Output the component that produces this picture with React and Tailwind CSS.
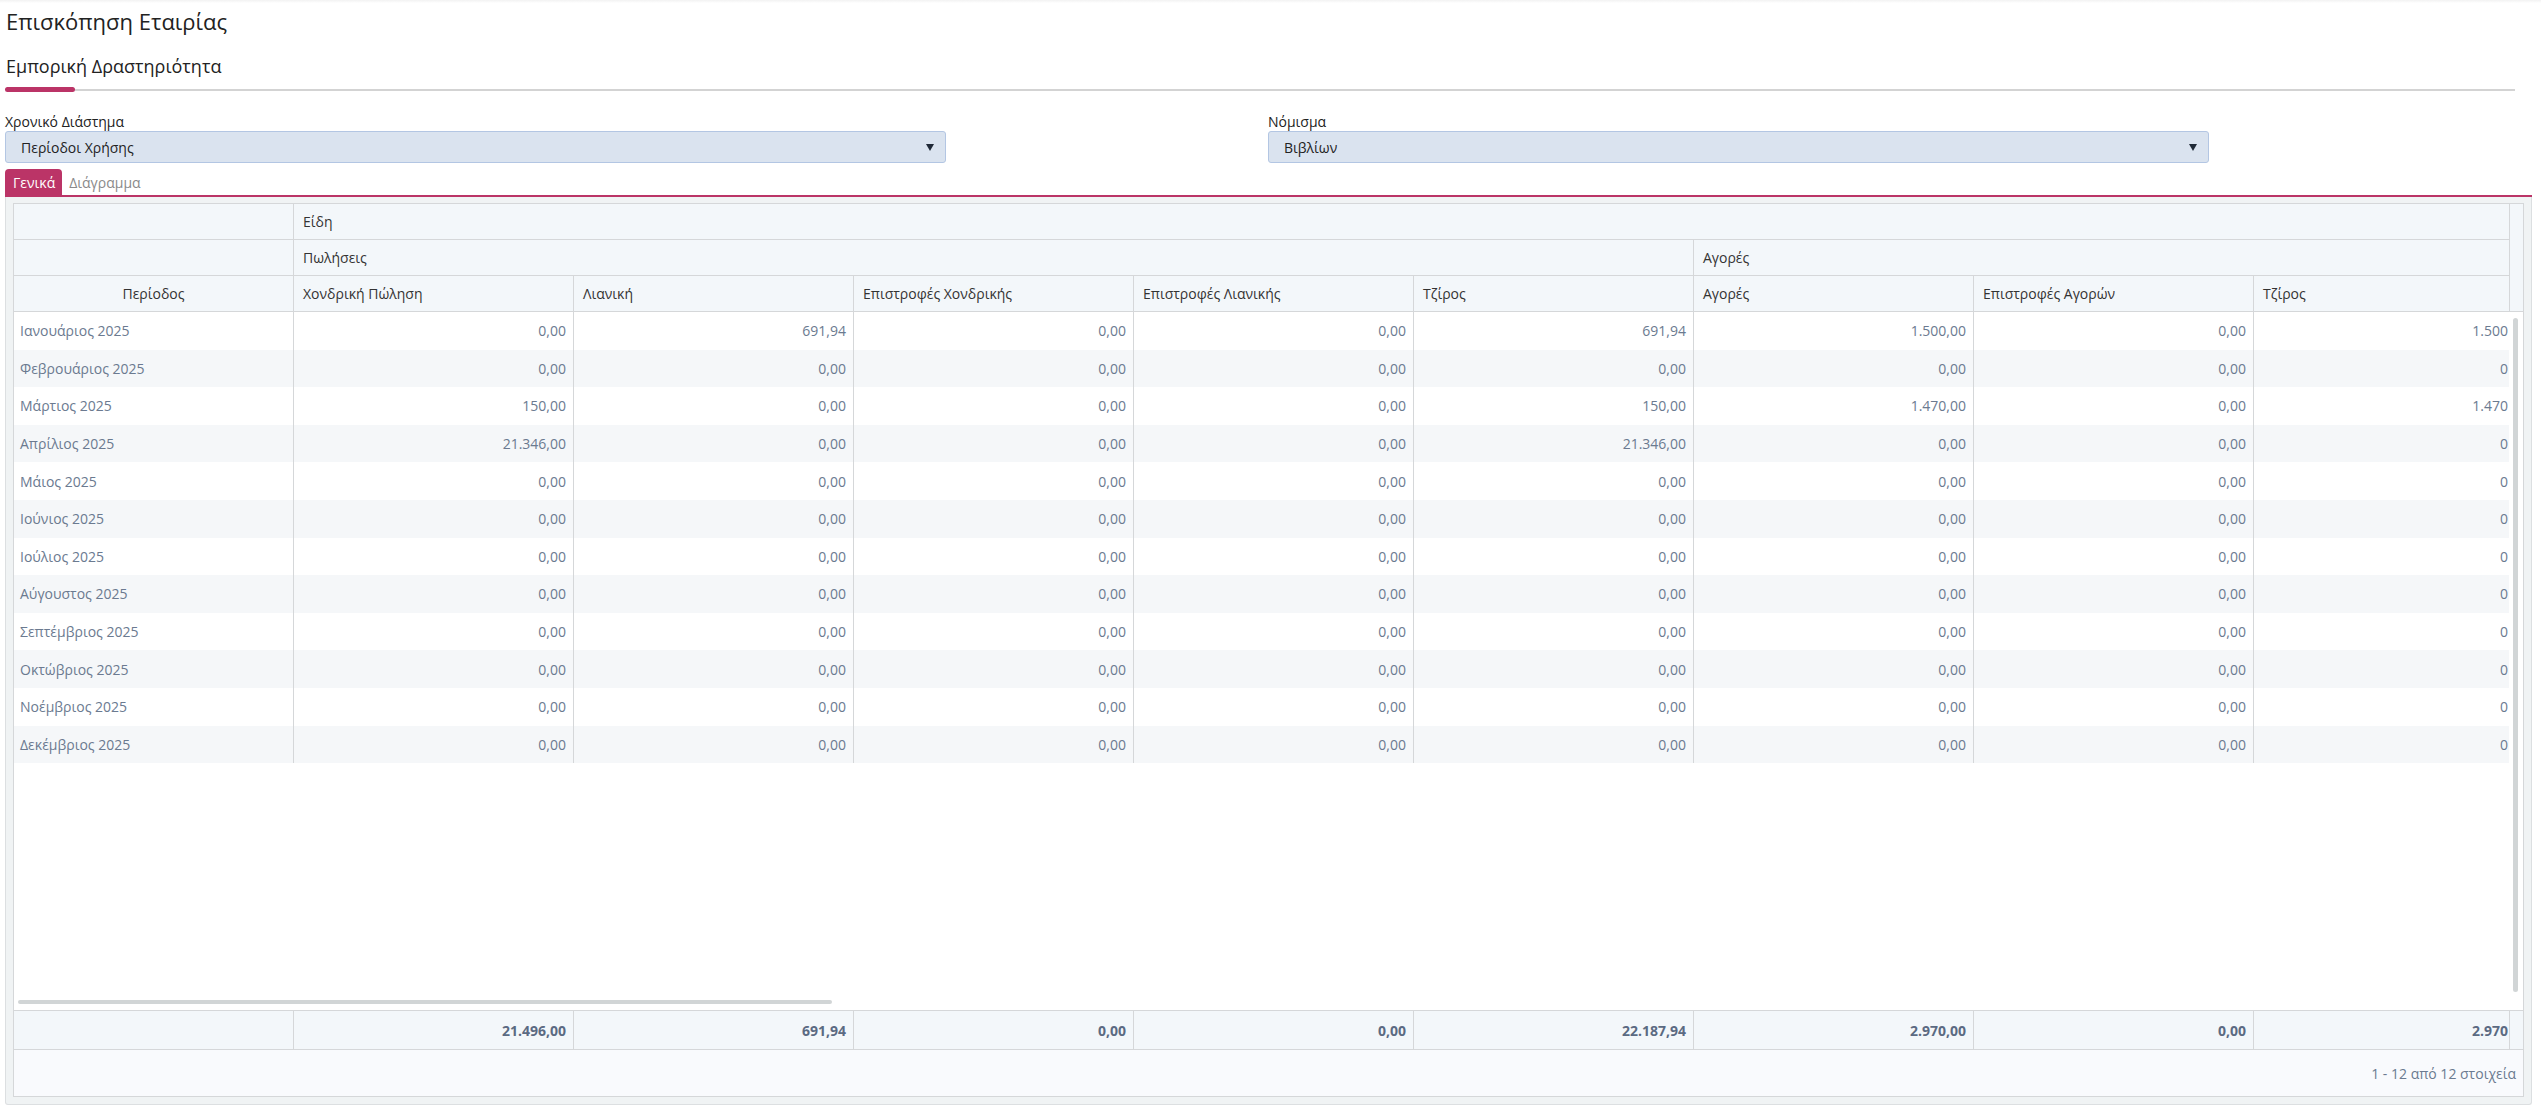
import React from "react";

const COL = "w-[280px] shrink-0";
const LAST = "w-[255px] shrink-0";

const headCols = [
  "Χονδρική Πώληση",
  "Λιανική",
  "Επιστροφές Χονδρικής",
  "Επιστροφές Λιανικής",
  "Τζίρος",
  "Αγορές",
  "Επιστροφές Αγορών",
  "Τζίρος",
];

// the last column is cut by the grid edge, only its visible part is shown
const Z = ["0,00", "0,00", "0,00", "0,00", "0,00", "0,00", "0,00", "0"];

const rows = [
  { name: "Ιανουάριος 2025", vals: ["0,00", "691,94", "0,00", "0,00", "691,94", "1.500,00", "0,00", "1.500"] },
  { name: "Φεβρουάριος 2025", vals: Z },
  { name: "Μάρτιος 2025", vals: ["150,00", "0,00", "0,00", "0,00", "150,00", "1.470,00", "0,00", "1.470"] },
  { name: "Απρίλιος 2025", vals: ["21.346,00", "0,00", "0,00", "0,00", "21.346,00", "0,00", "0,00", "0"] },
  { name: "Μάιος 2025", vals: Z },
  { name: "Ιούνιος 2025", vals: Z },
  { name: "Ιούλιος 2025", vals: Z },
  { name: "Αύγουστος 2025", vals: Z },
  { name: "Σεπτέμβριος 2025", vals: Z },
  { name: "Οκτώβριος 2025", vals: Z },
  { name: "Νοέμβριος 2025", vals: Z },
  { name: "Δεκέμβριος 2025", vals: Z },
];

const totals = ["21.496,00", "691,94", "0,00", "0,00", "22.187,94", "2.970,00", "0,00", "2.970"];

function SelectBox({ label, value, width }) {
  return (
    <div className="flex flex-col">
      <span className="text-[14px] leading-[20px] text-[#222]">{label}</span>
      <div className={`${width} h-[32px] mt-[-1px] flex items-center justify-between pl-[15px] pr-[11px] bg-[#dae3ef] border border-[#b3c6e3] rounded-[3px] text-[14px] text-[#222]`}>
        <span>{value}</span>
        <svg width="8" height="7" viewBox="0 0 8 7">
          <path d="M0 0h8L4 7z" fill="#1f2937" />
        </svg>
      </div>
    </div>
  );
}

function Cells({ vals, className }) {
  return vals.map((v, j) => (
    <div
      key={j}
      className={`${j === vals.length - 1 ? LAST + " pr-[1px]" : COL + " border-r border-[#d5d7d9] pr-[7px]"} flex items-center justify-end ${className || ""}`}
    >
      {v}
    </div>
  ));
}

export default function App() {
  return (
    <div className="w-[2541px] h-[1113px] bg-white overflow-hidden text-[#333]" style={{ fontFamily: '"Open Sans", "Noto Sans", sans-serif' }}>
      <div className="h-[3px] bg-gradient-to-b from-[#f2f2f2] to-white" />
      <div className="px-[5px] pr-[9px]">
        <h1 className="mt-[3px] text-[22px] leading-[30px] text-[#222] pl-[1px]">Επισκόπηση Εταιρίας</h1>
        <h2 className="mt-[18px] text-[18px] leading-[24px] text-[#222] pl-[1px]">Εμπορική Δραστηριότητα</h2>
        <div className="mt-[9px] flex items-center w-[2510px]">
          <div className="w-[70px] h-[5px] rounded-full bg-[#bb3467]" />
          <div className="flex-1 h-[2px] bg-[#d3d3d3]" />
        </div>

        <div className="mt-[20px] flex">
          <div className="w-[1263px]">
            <SelectBox label="Χρονικό Διάστημα" value="Περίοδοι Χρήσης" width="w-[941px]" />
          </div>
          <div>
            <SelectBox label="Νόμισμα" value="Βιβλίων" width="w-[941px]" />
          </div>
        </div>

        <div className="mt-[7px] flex items-end h-[27px] border-b-2 border-[#bb3467] w-[2527px]">
          <div className="h-[26px] pl-[8px] pr-[7px] flex items-center bg-[#bb3467] text-white text-[14px] font-medium rounded-t-[4px]">Γενικά</div>
          <div className="h-[26px] pl-[7px] pr-[6px] flex items-center text-[#8a8a8a] text-[14px]">Διάγραμμα</div>
        </div>

        <div className="w-[2527px] h-[908px] bg-[#f0f3f4] border border-t-0 border-[#dcdfe1] rounded-b-[3px] px-[7px] pt-[6px]">
          <div className="h-[894px] border border-[#d5d7d9] bg-white flex flex-col text-[14px]">
            {/* header */}
            <div className="h-[108px] flex bg-[#f3f7fa] border-b border-[#d5d7d9]">
              <div className="flex-1 overflow-hidden">
                <div className="w-[2495px] text-[#333]">
                  <div className="flex h-[36px] border-b border-[#d5d7d9]">
                    <div className={`${COL} border-r border-[#d5d7d9]`} />
                    <div className="flex-1 flex items-center pl-[9px]">Είδη</div>
                  </div>
                  <div className="flex h-[36px] border-b border-[#d5d7d9]">
                    <div className={`${COL} border-r border-[#d5d7d9]`} />
                    <div className="w-[1400px] shrink-0 flex items-center pl-[9px] border-r border-[#d5d7d9]">Πωλήσεις</div>
                    <div className="flex-1 flex items-center pl-[9px]">Αγορές</div>
                  </div>
                  <div className="flex h-[35px]">
                    <div className={`${COL} border-r border-[#d5d7d9] flex items-center justify-center`}>Περίοδος</div>
                    {headCols.map((h, i) => (
                      <div
                        key={i}
                        className={`${i === headCols.length - 1 ? LAST : COL + " border-r border-[#d5d7d9]"} flex items-center pl-[9px]`}
                      >
                        {h}
                      </div>
                    ))}
                  </div>
                </div>
              </div>
              <div className="w-[14px] border-l border-[#d5d7d9]" />
            </div>

            {/* body */}
            <div className="flex-1 flex min-h-0">
              <div className="flex-1 overflow-hidden flex flex-col">
                <div className="w-[2495px] text-[#6b7a90]">
                  {rows.map((r, i) => (
                    <div key={i} className={`flex h-[37.6px] ${i % 2 === 1 ? "bg-[#f5f7f9]" : "bg-white"}`}>
                      <div className={`${COL} border-r border-[#d5d7d9] flex items-center pl-[6px]`}>{r.name}</div>
                      <Cells vals={r.vals} />
                    </div>
                  ))}
                </div>
                <div className="flex-1" />
                <div className="h-[10px] pl-[4px]">
                  <div className="w-[814px] h-[4px] rounded-full bg-[#d1d5d6]" />
                </div>
              </div>
              <div className="w-[14px] pl-[4px] pt-[6px]">
                <div className="w-[5px] h-[674px] rounded-full bg-[#d1d5d6]" />
              </div>
            </div>

            {/* totals */}
            <div className="h-[40px] flex bg-[#f3f7fa] border-t border-b border-[#d5d7d9]">
              <div className="flex-1 overflow-hidden">
                <div className="w-[2495px] h-full flex font-bold text-[#5b6a82]">
                  <div className={`${COL} border-r border-[#d5d7d9]`} />
                  <Cells vals={totals} />
                </div>
              </div>
              <div className="w-[14px] border-l border-[#d5d7d9]" />
            </div>

            {/* pager */}
            <div className="h-[46px] bg-[#f9fafd] flex items-center justify-end pr-[7px] text-[#6b7a90]">
              1 - 12 από 12 στοιχεία
            </div>
          </div>
        </div>
      </div>
    </div>
  );
}
